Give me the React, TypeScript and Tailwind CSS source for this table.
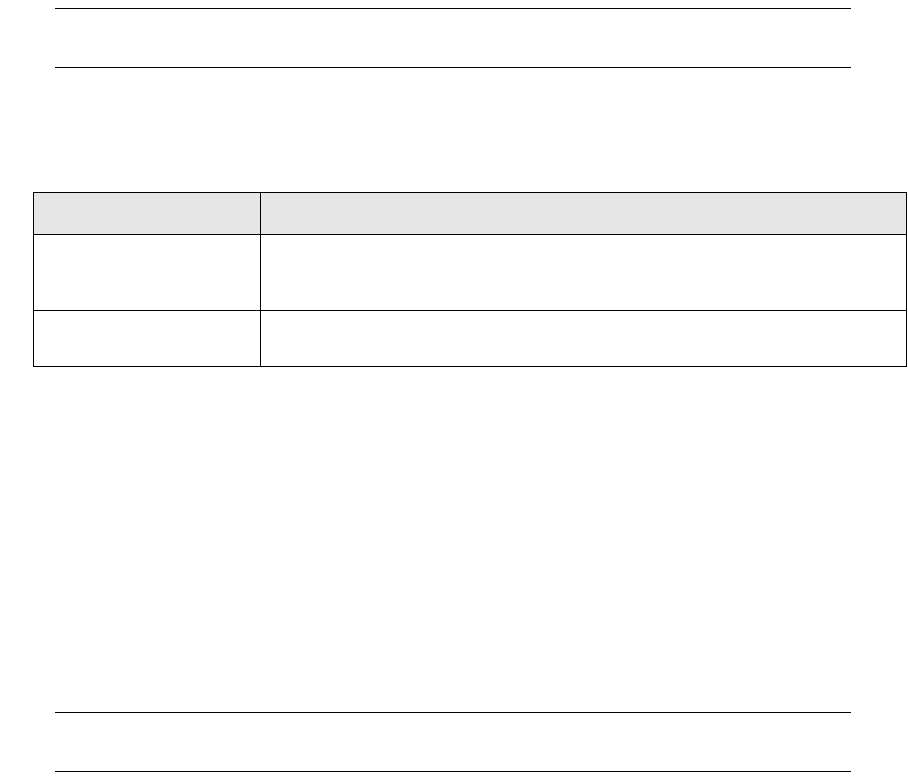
export default function App() {
    return (
        <div className="w-[908px] h-[777px] bg-white flex flex-col font-['Liberation_Sans',sans-serif]">
            <div className="mt-[8px] ml-[55px] w-[796px] h-[60px] border-y border-black" />

            <table className="mt-[124px] ml-[33px] w-[874px] border-collapse border border-black text-sm">
                <thead>
                    <tr className="h-[42px] bg-[#e6e6e6]">
                        <th className="w-[227px] border border-black"></th>
                        <th className="border border-black"></th>
                    </tr>
                </thead>
                <tbody>
                    <tr className="h-[76px]">
                        <td className="border border-black"></td>
                        <td className="border border-black"></td>
                    </tr>
                    <tr className="h-[56px]">
                        <td className="border border-black"></td>
                        <td className="border border-black"></td>
                    </tr>
                </tbody>
            </table>

            <div className="mt-auto mb-[5px] ml-[55px] w-[796px] h-[60px] border-y border-black" />
        </div>
    )
}
